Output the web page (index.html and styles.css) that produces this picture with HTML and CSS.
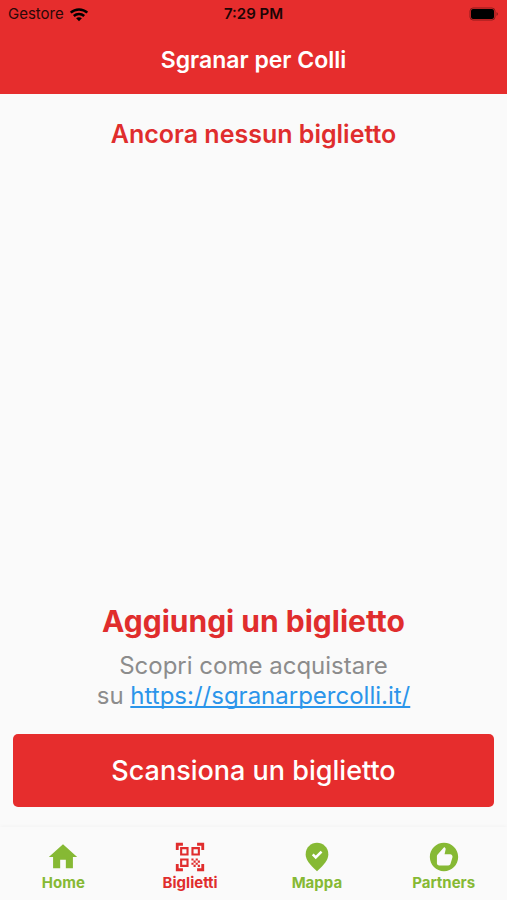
FILE: index.html
```html
<!DOCTYPE html>
<html lang="it">
<head>
<meta charset="utf-8">
<meta name="viewport" content="width=device-width, initial-scale=1">
<title>Sgranar per Colli</title>
<link rel="stylesheet" href="styles.css">
</head>
<body>
<div class="app">
  <header class="header">
    <div class="status">
      <div class="carrier">
        <span>Gestore</span>
        <svg class="wifi" viewBox="0 0 20 15" aria-hidden="true">
          <path d="M1.700 5.600C6.300 1.300 13.700 1.300 18.300 5.600" />
          <path d="M4.800 9C7.800 6.200 12.200 6.200 15.200 9" />
          <path class="wifi-dot" d="M7.100 11.300C8.700 9.900 11.300 9.900 12.900 11.300L10 14.200Z" />
        </svg>
      </div>
      <span class="clock">7:29 PM</span>
      <svg class="battery" viewBox="0 0 30 14" aria-hidden="true">
        <rect class="battery-case" x="1" y="1" width="25" height="12" rx="3" />
        <rect x="2" y="2" width="23" height="10" rx="2" />
        <path class="battery-tip" d="M27.500 5v4c2-1 2-3 0-4z" />
      </svg>
    </div>
    <h1 class="title">Sgranar per Colli</h1>
  </header>
  <main class="content">
    <h2 class="empty">Ancora nessun biglietto</h2>
    <section class="add">
      <h2 class="add-title">Aggiungi un biglietto</h2>
      <p class="info">Scopri come acquistare<br>su <a href="https://sgranarpercolli.it/">https://sgranarpercolli.it/</a></p>
      <button class="scan" type="button">Scansiona un biglietto</button>
    </section>
  </main>
  <nav class="tabs">
    <a class="tab" href="#home">
      <svg class="icon" viewBox="0 0 24 24" aria-hidden="true"><path d="M10 20v-6h4v6h5v-8h3L12 3 2 12h3v8z"/></svg>
      <span>Home</span>
    </a>
    <a class="tab active" href="#biglietti" aria-current="page">
      <svg class="icon" viewBox="0 0 24 24" aria-hidden="true"><path d="M9.500 6.500v3h-3v-3h3M11 5H5v6h6V5zm-1.500 9.500v3h-3v-3h3M11 13H5v6h6v-6zm6.500-6.500v3h-3v-3h3M19 5h-6v6h6V5zm-6 8h1.500v1.500H13V13zm1.500 1.500H16V16h-1.500v-1.500zM16 13h1.500v1.500H16V13zm-3 3h1.500v1.500H13V16zm1.500 1.500H16V19h-1.500v-1.500zM16 16h1.500v1.500H16V16zm1.500-1.500H19V16h-1.500v-1.500zm0 3H19V19h-1.500v-1.500zM22 7h-2V4h-3V2h5v5zm0 15v-5h-2v3h-3v2h5zM2 22h5v-2H4v-3H2v5zM2 2v5h2V4h3V2H2z"/></svg>
      <span>Biglietti</span>
    </a>
    <a class="tab" href="#mappa">
      <svg class="icon" viewBox="0 0 24 24" aria-hidden="true"><path d="M12 2c-4.200 0-8 3.220-8 8.200 0 3.320 2.670 7.250 8 11.800 5.330-4.550 8-8.480 8-11.800C20 5.220 16.200 2 12 2z"/><path class="tick" d="M9 10.200l2.100 2.100 4.100-4.100"/></svg>
      <span>Mappa</span>
    </a>
    <a class="tab" href="#partners">
      <svg class="icon" viewBox="0 0 24 24" aria-hidden="true"><path d="M12 2C6.480 2 2 6.480 2 12s4.480 10 10 10 10-4.480 10-10S17.520 2 12 2zm6 9.800c0 .170-.020.340-.060.500l-1.340 4.530c-.180.700-.820 1.170-1.530 1.170H8.600C7.720 18 7 17.280 7 16.400v-5.060c0-.440.180-.860.490-1.170L12.200 5l.690.670c.180.180.290.440.290.700v.200L12.410 10h4.010c.880 0 1.580.720 1.580 1.600z"/></svg>
      <span>Partners</span>
    </a>
  </nav>
</div>
</body>
</html>
```
FILE: styles.css
```css
* {
  box-sizing: border-box;
}

body {
  margin: 0;
  background: #fafafa;
  color: #000;
  font-family: Inter, "Liberation Sans", sans-serif;
}

h1, h2, p {
  margin: 0;
}

.app {
  display: flex;
  flex-direction: column;
  min-height: 100vh;
}

.header {
  background: #e62d2d;
  padding-bottom: 18px;
}

.status {
  display: grid;
  grid-template-columns: 1fr auto 1fr;
  align-items: center;
  height: 28px;
  padding: 0 8px;
  font-size: 15px;
  line-height: 20px;
}

.carrier {
  display: flex;
  align-items: center;
  gap: 5px;
}

.carrier span {
  color: #2a0808;
}

.clock {
  color: #1c0505;
  font-weight: 600;
}

.wifi {
  width: 20px;
  height: 15px;
  fill: none;
  stroke: #000;
  stroke-width: 2.500;
}

.wifi .wifi-dot {
  fill: #000;
  stroke: none;
}

.battery {
  justify-self: end;
  width: 30px;
  height: 14px;
}

.battery-case {
  fill: none;
  stroke: #8e1b1b;
}

.battery-tip {
  fill: #8e1b1b;
}

.title {
  padding-top: 16px;
  color: #fff;
  font-size: 23px;
  font-weight: 600;
  line-height: 32px;
  text-align: center;
}

.content {
  display: flex;
  flex: 1;
  flex-direction: column;
  justify-content: space-between;
  padding: 24px 13px 20px;
  text-align: center;
}

.empty,
.add-title {
  color: #e02d2d;
}

.empty {
  font-size: 25px;
  font-weight: 600;
  line-height: 32px;
}

.add-title {
  font-size: 30px;
  font-weight: 700;
  line-height: 40px;
}

.info {
  margin-top: 10px;
  color: #8c8c8c;
  font-size: 24px;
  line-height: 30px;
}

.info a {
  color: #2b95ea;
  text-decoration-thickness: 2px;
  text-underline-offset: 2px;
  text-decoration-skip-ink: none;
}

.scan {
  display: block;
  width: 100%;
  height: 73px;
  margin-top: 23px;
  border: 0;
  border-radius: 5px;
  background: #e62d2d;
  color: #fff;
  font: 500 27px/32px Inter, "Liberation Sans", sans-serif;
}

.tabs {
  display: grid;
  grid-template-columns: repeat(4, 1fr);
  padding: 13px 0 8px;
  background: #fafafa;
  box-shadow: 0 -1px 4px rgba(0, 0, 0, 0.03);
}

.tab {
  display: flex;
  flex-direction: column;
  align-items: center;
  color: #86b934;
  font-size: 15px;
  font-weight: 700;
  line-height: 18px;
  text-decoration: none;
}

.tab.active {
  color: #e02d2d;
}

.icon {
  width: 34px;
  height: 34px;
  fill: currentColor;
}

.tick {
  fill: none;
  stroke: #fff;
  stroke-width: 1.800;
}
```
